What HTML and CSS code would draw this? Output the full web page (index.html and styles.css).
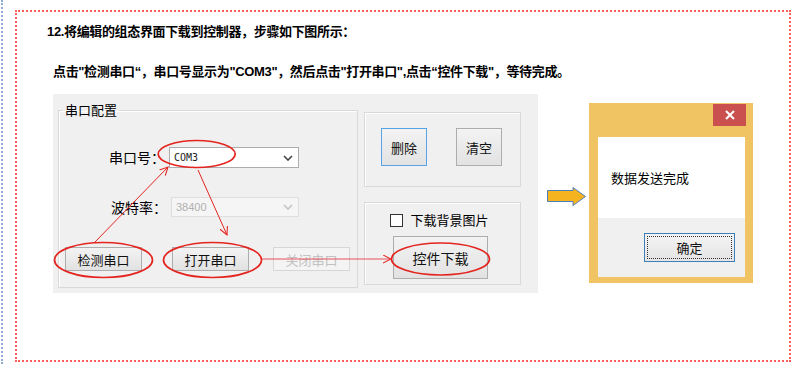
FILE: index.html
```html
<!DOCTYPE html>
<html lang="zh-CN">
<head>
  <meta charset="UTF-8">
  <title>下载到控制器</title>
  <link rel="stylesheet" href="styles.css">
</head>
<body>

  <div class="page">
    <div class="frame">
      <p class="step-title">12.将编辑的组态界面下载到控制器，步骤如下图所示：</p>
      <p class="step-text">点击"检测串口“，串口号显示为"COM3"，然后点击"打开串口",点击“控件下载"，等待完成。</p>

      <div class="figure">
        <!-- serial port tool screenshot -->
        <div class="shot">
          <fieldset class="serial">
            <legend>串口配置</legend>
            <div class="field first">
              <label>串口号：</label>
              <div class="combo">
                <span class="value mono">COM3</span>
                <svg class="chev" width="10" height="6" viewBox="0 0 10 6"><polyline points="1,1 5,5 9,1" fill="none" stroke="#444" stroke-width="1.6"/></svg>
              </div>
            </div>
            <div class="field second">
              <label>波特率：</label>
              <div class="combo off">
                <span class="value">38400</span>
                <svg class="chev" width="10" height="6" viewBox="0 0 10 6"><polyline points="1,1 5,5 9,1" fill="none" stroke="#c4c4c4" stroke-width="1.6"/></svg>
              </div>
            </div>
            <div class="btn-row">
              <button class="btn">检测串口</button>
              <button class="btn">打开串口</button>
              <button class="btn off">关闭串口</button>
            </div>
          </fieldset>

          <div class="side">
            <div class="group tools">
              <button class="btn big focus">删除</button>
              <button class="btn big">清空</button>
            </div>
            <div class="group download">
              <div class="check"><span class="box"></span>下载背景图片</div>
              <button class="btn load">控件下载</button>
            </div>
          </div>

          <!-- red annotations drawn over the screenshot -->
          <svg class="marks" width="485" height="199" viewBox="0 0 485 199">
            <defs>
              <marker id="head" viewBox="0 0 10 10" refX="9" refY="5" markerWidth="9" markerHeight="9" orient="auto" markerUnits="userSpaceOnUse">
                <path d="M0,0.5 L9,5 L0,9.5" fill="none" stroke="#e3241f" stroke-width="1.2"/>
              </marker>
            </defs>
            <ellipse cx="143.7" cy="60" rx="38.5" ry="13.5" fill="none" stroke="#e3241f" stroke-width="1.7"/>
            <ellipse cx="50.5" cy="166" rx="49" ry="17.5" fill="none" stroke="#e3241f" stroke-width="1.7"/>
            <ellipse cx="159.5" cy="166" rx="49" ry="17.5" fill="none" stroke="#e3241f" stroke-width="1.7"/>
            <ellipse cx="387.5" cy="165" rx="49" ry="16" fill="none" stroke="#e3241f" stroke-width="1.7"/>
            <line x1="42" y1="148" x2="115" y2="73" stroke="#e3241f" stroke-width="1" marker-end="url(#head)"/>
            <line x1="145" y1="76" x2="174" y2="141" stroke="#e3241f" stroke-width="1" marker-end="url(#head)"/>
            <line x1="209" y1="165" x2="338" y2="165" stroke="#e8505a" stroke-width="1" marker-end="url(#head)"/>
          </svg>
        </div>

        <svg class="next" width="40" height="20" viewBox="0 0 40 20">
          <polygon points="0.5,3.5 26,3.5 26,0.5 38.5,9.5 26,18.5 26,14.5 0.5,14.5" fill="#f6b320" stroke="#4d7fbd" stroke-width="1"/>
        </svg>

        <!-- message box -->
        <div class="dialog">
          <div class="titlebar">
            <span class="close">
              <svg width="10" height="10" viewBox="0 0 10 10"><path d="M1,1 L9,9 M9,1 L1,9" stroke="#fff" stroke-width="2"/></svg>
            </span>
          </div>
          <div class="message">数据发送完成</div>
          <div class="actions">
            <button class="btn ok">确定</button>
          </div>
        </div>
      </div>
    </div>
  </div>

</body>
</html>
```

FILE: styles.css
```css
* {
  box-sizing: border-box;
}

body {
  margin: 0;
  background: #fff;
  font-family: "Liberation Sans", "Noto Sans CJK SC", sans-serif;
  color: #000;
}

.page {
  margin-left: 1px;
  height: 364px;
  padding: 10px 0 0 12px;
  border-left: 2px dotted #8faad4;
}

.frame {
  width: 776px;
  height: 352px;
  border: 2px dotted #ff5c5c;
  padding-left: 30px;
}

.step-title,
.step-text {
  margin: 10px 0 0;
  font-size: 13px;
  line-height: 20px;
  font-weight: bold;
  letter-spacing: -0.35px;
}

.step-text {
  margin: 20px 0 0 6px;
}

.figure {
  display: flex;
  align-items: flex-start;
  margin: 12px 0 0 6px;
}

/* screenshot of the serial tool */
.shot {
  position: relative;
  width: 485px;
  height: 199px;
  background: #f0f0f0;
  display: flex;
  align-items: flex-start;
  gap: 6px;
  padding: 9px 0 0 5px;
  font-family: "Noto Sans CJK SC", sans-serif;
  font-size: 13px;
}

.serial {
  width: 300px;
  height: 185px;
  margin: 0;
  padding: 0;
  border: 1px solid #d9d9d9;
  box-shadow: inset 1px 1px 0 #fff;
}

.serial legend {
  margin-left: 4px;
  padding: 0 2px;
  line-height: 14px;
  font-size: 13px;
}

.field {
  display: flex;
  align-items: center;
  height: 21px;
  margin-left: 50px;
}

.field.first {
  margin-top: 30px;
}

.field.second {
  margin-top: 29px;
  height: 20px;
  margin-left: 52px;
}

.field label {
  width: 60px;
  line-height: 21px;
  font-size: 14px;
}

.combo {
  width: 130px;
  height: 100%;
  display: flex;
  align-items: center;
  justify-content: space-between;
  padding: 0 5px 0 4px;
  background: #fff;
  border: 1px solid #acacac;
}

.combo.off {
  width: 128px;
  background: #f5f5f5;
  border-color: #dedede;
  color: #b0b0b0;
}

.value {
  font-family: "Liberation Sans", sans-serif;
  font-size: 11px;
}

.value.mono {
  font-family: "DejaVu Sans Mono", monospace;
  font-size: 10px;
  color: #222;
}

.btn-row {
  display: flex;
  gap: 30px;
  margin: 30px 0 0 6px;
}

.btn {
  width: 77px;
  height: 24px;
  padding: 0;
  border: 1px solid #adadad;
  background: linear-gradient(#f3f3f3, #e2e2e2);
  font-family: "Noto Sans CJK SC", sans-serif;
  font-size: 13px;
  color: #111;
}

.btn.off {
  margin-left: -6px;
  border-color: #d6d6d6;
  background: #f4f4f4;
  color: #c2c2c2;
}

.side {
  display: flex;
  flex-direction: column;
  gap: 15px;
  width: 157px;
  margin-top: 9px;
}

.group {
  border: 1px solid #d9d9d9;
  box-shadow: inset 1px 1px 0 #fff;
}

.tools {
  height: 75px;
  display: flex;
  gap: 29px;
  padding: 15px 0 0 16px;
}

.btn.big {
  width: 46px;
  height: 38px;
}

.btn.focus {
  border-color: #55a5e6;
}

.download {
  height: 83px;
  display: flex;
  flex-direction: column;
  align-items: center;
  padding-top: 10px;
}

.check {
  display: flex;
  align-items: center;
  gap: 7px;
  line-height: 14px;
  margin-left: -6px;
}

.box {
  width: 13px;
  height: 13px;
  background: #fff;
  border: 1px solid #333;
}

.btn.load {
  width: 95px;
  height: 43px;
  margin: 9px 0 0 -4px;
  font-size: 14px;
}

.marks {
  position: absolute;
  left: 0;
  top: 0;
  pointer-events: none;
}

.next {
  margin: 93px 0 0 9px;
}

/* windows message box */
.dialog {
  width: 164px;
  height: 180px;
  margin: 9px 0 0 2px;
  background: #f0c462;
  display: flex;
  flex-direction: column;
  padding: 0 8px 6px 9px;
}

.titlebar {
  height: 34px;
  display: flex;
  justify-content: flex-end;
  padding-top: 1px;
}

.close {
  width: 33px;
  height: 22px;
  background: #c9504f;
  display: flex;
  align-items: center;
  justify-content: center;
  margin-right: -1px;
}

.message {
  height: 81px;
  background: #fff;
  padding: 31px 0 0 13px;
  font-family: "Noto Sans CJK SC", sans-serif;
  font-size: 13px;
  line-height: 20px;
}

.actions {
  flex: 1;
  background: #f0f0f0;
  display: flex;
  justify-content: flex-end;
  padding: 15px 10px 0 0;
}

.btn.ok {
  width: 91px;
  height: 29px;
  border-color: #3d7fb8;
  outline: 1px dotted #333;
  outline-offset: -4px;
  background: linear-gradient(#f4f4f4, #e4e4e4);
}
```
